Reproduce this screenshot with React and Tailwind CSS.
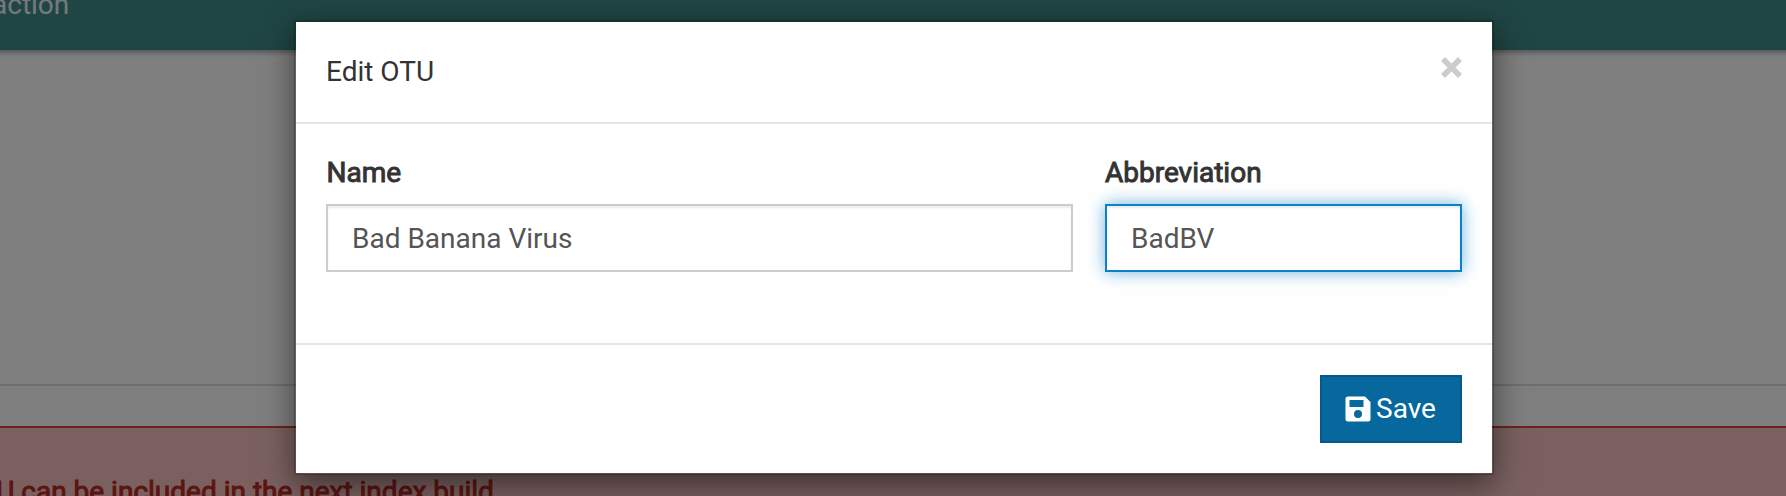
export default function App() {
  return (
    <div className="relative h-[496px] w-full overflow-hidden bg-white font-[Roboto,sans-serif] text-[28px] leading-[40px] text-[#333333]">
      <div className="flex h-full flex-col">
        <header className="relative -mx-[10px] flex h-[50px] shrink-0 bg-[#3e8a89] shadow-[0_2px_6px_rgba(0,0,0,0.4)]">
          <span className="-mt-[15px] ml-[2px] text-white/90">action</span>
        </header>
        <div className="h-[334px] shrink-0" />
        <hr className="h-[2px] shrink-0 border-0 bg-[#dddddd]" />
        <div className="h-[40px] shrink-0" />
        <div className="h-[100px] shrink-0 border-t-2 border-[#d6463e] bg-[#f4c3c1] pt-[44px]">
          <strong className="-ml-[20.500px] block whitespace-nowrap font-normal text-[#b82a25] [-webkit-text-stroke:0.95px_#b82a25]">
            TU can be included in the next index build
          </strong>
        </div>
      </div>
      <div className="absolute inset-0 flex items-start bg-black/50 pl-[294px] pt-[20px]">
        <section className="w-[1200px] border-2 border-black/20 bg-white bg-clip-padding shadow-[0_10px_30px_rgba(0,0,0,0.5)]">
          <header className="flex h-[102px] justify-between border-b-2 border-[#e5e5e5] p-[30px]">
            <h4>Edit OTU</h4>
            <button aria-label="Close" className="flex h-[30px] w-[21px] items-center justify-center">
              <svg viewBox="0 0 21 21" className="h-[21px] w-[21px]">
                <path d="M2 2 19 19M19 2 2 19" stroke="#cccccc" strokeWidth="5.6" />
              </svg>
            </button>
          </header>
          <div className="flex h-[219px] gap-[32px] px-[30px] pt-[29px]">
            <label className="flex w-[747px] flex-col gap-[11px]">
              <span className="pl-[0.5px] [-webkit-text-stroke:0.95px_#333333]">Name</span>
              <input
                defaultValue="Bad Banana Virus"
                className="h-[68px] border-2 border-[#cccccc] px-[24px] text-[#555555] shadow-[inset_0_2px_2px_rgba(0,0,0,0.075)] outline-none"
              />
            </label>
            <label className="flex w-[357px] flex-col gap-[11px]">
              <span className="[-webkit-text-stroke:0.95px_#333333]">Abbreviation</span>
              <input
                defaultValue="BadBV"
                className="h-[68px] border-2 border-[#0b82c6] px-[24px] text-[#555555] shadow-[inset_0_2px_2px_rgba(0,0,0,0.075),0_0_16px_rgba(11,130,198,0.6)] outline-none"
              />
            </label>
          </div>
          <footer className="flex h-[130px] justify-end border-t-2 border-[#e5e5e5] p-[30px] pt-[30px]">
            <button className="flex h-[68px] w-[142px] items-center gap-[5px] border-2 border-[#07578a] bg-[#07689d] pl-[23px] text-white">
              <svg viewBox="0 0 26 26" className="h-[26px] w-[26px] shrink-0">
                <path
                  fill="currentColor"
                  fillRule="evenodd"
                  d="M3 .5h17L25.500 6v17a2.500 2.500 0 0 1-2.500 2.500H3A2.500 2.500 0 0 1 .5 23V3A2.500 2.500 0 0 1 3 .5ZM4.500 4v7h14V4ZM13 14a4 4 0 1 0 0 8 4 4 0 0 0 0-8Z"
                />
              </svg>
              <span>Save</span>
            </button>
          </footer>
        </section>
      </div>
    </div>
  );
}
